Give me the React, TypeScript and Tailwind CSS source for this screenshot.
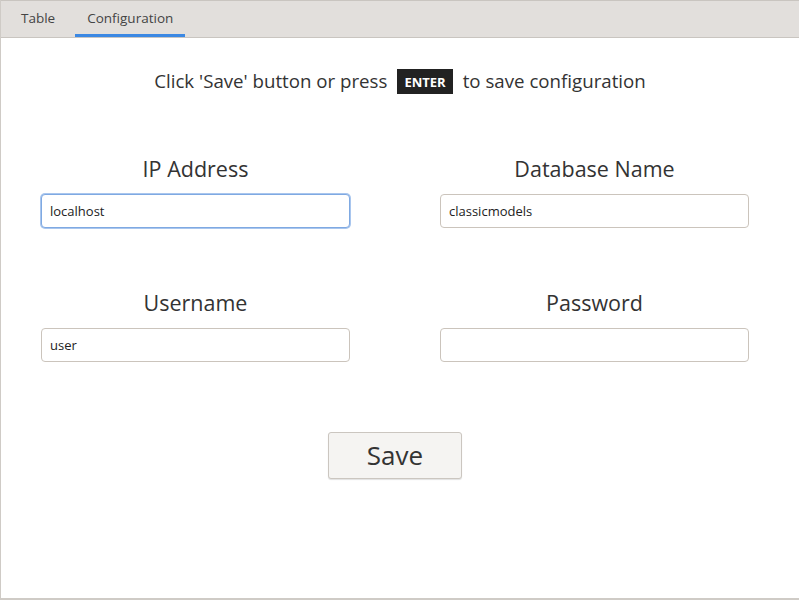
import React from "react";

const fields = [
  { label: "IP Address", value: "localhost", focused: true },
  { label: "Database Name", value: "classicmodels" },
  { label: "Username", value: "user" },
  { label: "Password", value: "", type: "password" },
];

export default function App() {
  return (
    <div
      className="w-[799px] h-[600px] flex flex-col bg-white border-l border-b-2 border-[#cfcbc6] text-[#333]"
      style={{ fontFamily: '"Open Sans", sans-serif' }}
    >
      {/* Tabs */}
      <div className="h-[38px] flex items-end bg-[#e2dfdc] border-t border-b border-[#c9c5c0] text-[13.5px] text-[#444]">
        <div className="h-full flex items-center px-[20px] pb-[2px]">Table</div>
        <div className="h-full flex items-center px-[12px] border-b-[3px] border-[#3b88e3] pt-[1px]">
          Configuration
        </div>
      </div>

      {/* Hint */}
      <div className="flex items-center justify-center pt-[30px] text-[18.7px] leading-[26px]">
        <span>Click 'Save' button or press</span>
        <span className="mx-[10px] px-[7px] h-[25px] flex items-center bg-[#222] text-white text-[13px] font-bold pt-[2px]">
          ENTER
        </span>
        <span>to save configuration</span>
      </div>

      {/* Form */}
      <div className="grid grid-cols-[309px_309px] gap-x-[90px] gap-y-[60px] pl-[40px] pt-[60px]">
        {fields.map((f) => (
          <div key={f.label} className="flex flex-col items-center">
            <div className="text-[21.5px] leading-[30px] mb-[10px]">{f.label}</div>
            <input
              type={f.type ?? "text"}
              defaultValue={f.value}
              autoFocus={f.focused}
              className={
                "w-[309px] h-[34px] rounded-[4px] px-[8px] text-[13px] text-[#222] bg-white outline-none border " +
                (f.focused
                  ? "border-[#7fa9e2] shadow-[0_0_0_1px_#a9c6ee]"
                  : "border-[#cbc4bc]")
              }
              style={{ fontFamily: '"Open Sans", sans-serif' }}
            />
          </div>
        ))}
      </div>

      {/* Save */}
      <div className="flex justify-center pt-[70px] pr-[10px]">
        <button className="w-[134px] h-[47px] rounded-[3px] border border-[#cbc6c0] bg-[#f5f4f2] text-[26px] text-[#333] shadow-[0_1px_1px_rgba(0,0,0,0.12)]">
          Save
        </button>
      </div>
    </div>
  );
}
